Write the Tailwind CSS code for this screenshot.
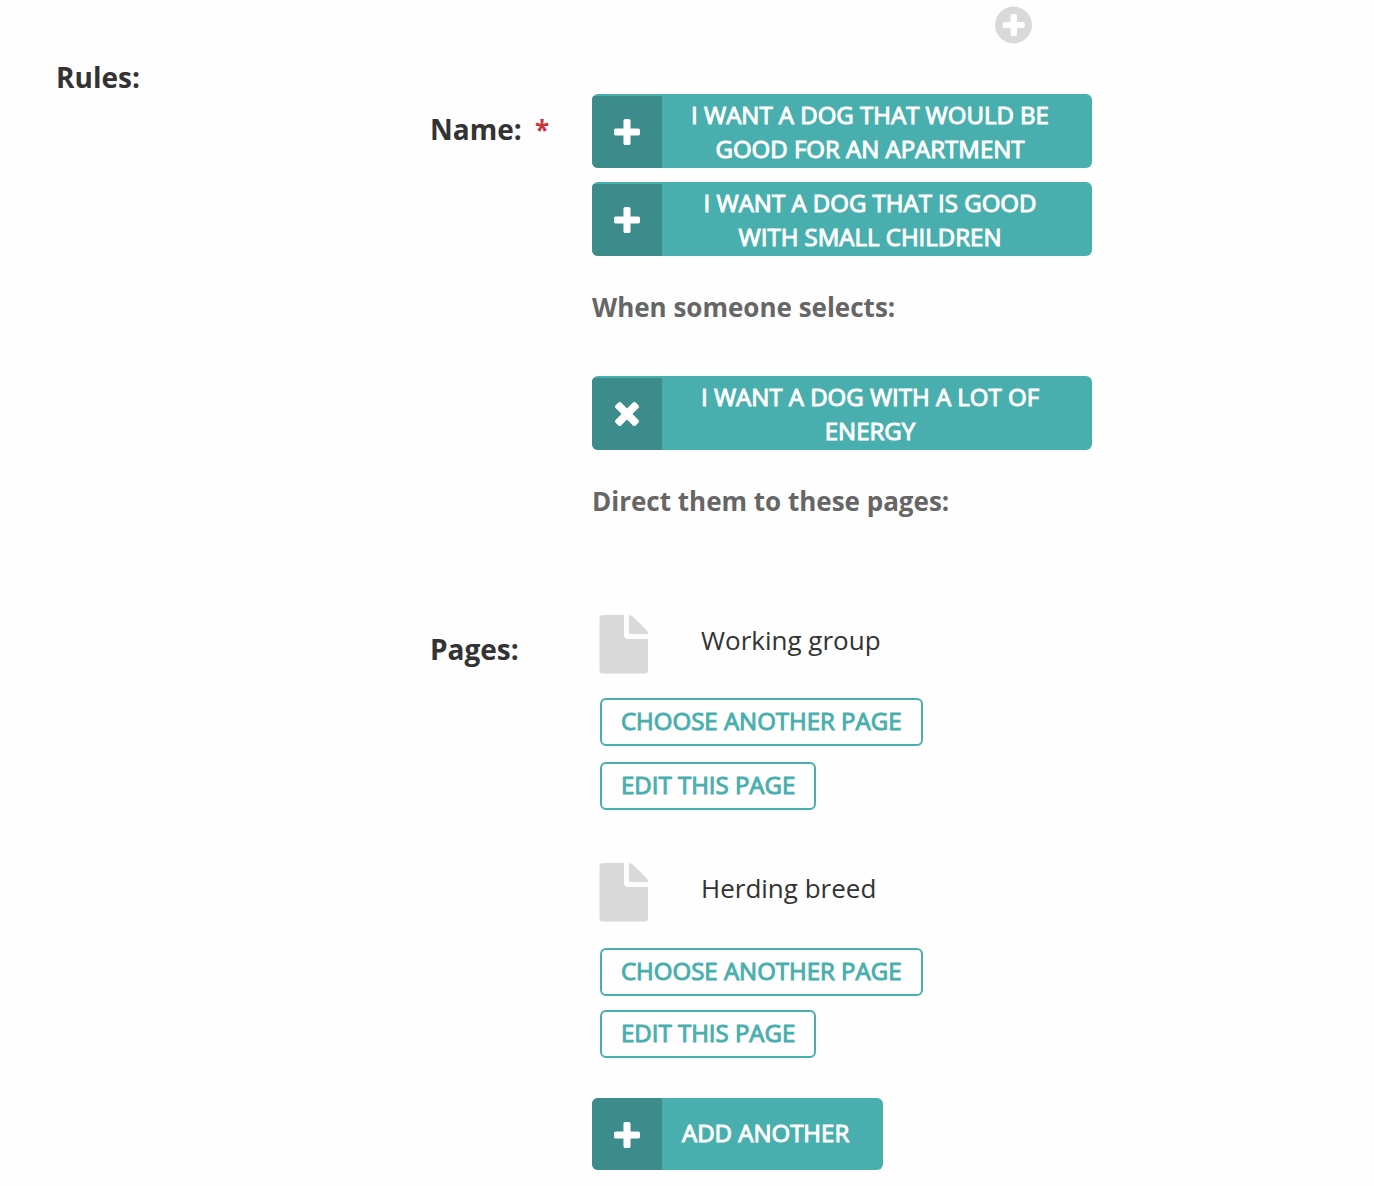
<!DOCTYPE html>
<html lang="en">
<head>
<meta charset="utf-8">
<meta name="viewport" content="width=device-width, initial-scale=1">
<title>Rules</title>
<script src="https://cdn.jsdelivr.net/npm/@tailwindcss/browser@4"></script>
</head>
<body class="bg-[#fefefe] font-['Open_Sans',sans-serif] text-[26px] leading-[34px] text-[#333]">
<svg class="hidden">
  <symbol id="plus" viewBox="192 128 1408 1408"><path d="M1600 736v192q0 40-28 68t-68 28h-416v416q0 40-28 68t-68 28h-192q-40 0-68-28t-28-68v-416h-416q-40 0-68-28t-28-68v-192q0-40 28-68t68-28h416v-416q0-40 28-68t68-28h192q40 0 68 28t28 68v416h416q40 0 68 28t28 68z" fill="currentColor"/></symbol>
  <symbol id="cross" viewBox="252 316 1288 1288"><path d="M1490 1322q0 40-28 68l-136 136q-28 28-68 28t-68-28l-294-294-294 294q-28 28-68 28t-68-28l-136-136q-28-28-28-68t28-68l294-294-294-294q-28-28-28-68t28-68l136-136q28-28 68-28t68 28l294 294 294-294q28-28 68-28t68 28l136 136q28 28 28 68t-28 68l-294 294 294 294q28 28 28 68z" fill="currentColor"/></symbol>
  <symbol id="file" viewBox="0 0 50 60"><path d="M3.500 1H25v20a4 4 0 0 0 4 4h20v31.500a3 3 0 0 1-3 3H3.500a3 3 0 0 1-3-3V4a3 3 0 0 1 3-3zM30 1c2 .3 3.500 1.200 5 2.700L46.500 15c1.400 1.500 2.200 3 2.500 5H30z" fill="currentColor"/></symbol>
</svg>
<form>
  <div class="flex h-[60px] pt-[6px] pl-[994px]">
    <button type="button" aria-label="Add" class="size-[38px] text-[#d9d9d9]">
      <svg class="size-full" viewBox="0 0 38 38"><circle cx="19.500" cy="19" r="18.500" fill="currentColor"/><path d="M18 8h3.500a1.500 1.500 0 0 1 1.500 1.500V16h6.200a1.500 1.500 0 0 1 1.500 1.500v3a1.500 1.500 0 0 1-1.500 1.500H23v6.500a1.500 1.500 0 0 1-1.500 1.500H18a1.500 1.500 0 0 1-1.500-1.500V22h-6.300a1.500 1.500 0 0 1-1.500-1.500v-3a1.500 1.500 0 0 1 1.500-1.500h6.300V9.500A1.500 1.500 0 0 1 18 8z" fill="#fff"/></svg>
    </button>
  </div>
  <div class="grid grid-cols-[374px_162px_minmax(0,500px)] pl-14 pb-4">
    <h2 class="text-[28px] leading-[34px] font-bold">Rules:</h2>
    <h3 class="pt-[52px] text-[28px] leading-[34px] font-bold">Name: <span class="ml-[6px] text-[26px] text-[#cd3238]">*</span></h3>
    <section class="pt-[34px]">
      <div class="flex flex-col gap-[14px]">
        <button type="button" class="flex w-full overflow-hidden rounded-md bg-[#49afae] pt-[2px] text-2xl/[34px] text-white [-webkit-text-stroke:1px_currentColor]">
          <span class="flex w-[70px] shrink-0 items-center justify-center self-stretch bg-[#3b8c8b]"><svg class="size-[26px]"><use href="#plus"/></svg></span>
          <span class="flex-1 pt-[2px] pr-[34px] pb-[2px] pl-5">I WANT A DOG THAT WOULD BE GOOD FOR AN APARTMENT</span>
        </button>
        <button type="button" class="flex w-full overflow-hidden rounded-md bg-[#49afae] pt-[2px] text-2xl/[34px] text-white [-webkit-text-stroke:1px_currentColor]">
          <span class="flex w-[70px] shrink-0 items-center justify-center self-stretch bg-[#3b8c8b]"><svg class="size-[26px]"><use href="#plus"/></svg></span>
          <span class="flex-1 pt-[2px] pr-[34px] pb-[2px] pl-5">I WANT A DOG THAT IS GOOD WITH SMALL CHILDREN</span>
        </button>
      </div>
      <p class="mt-[34px] font-bold text-[#666]">When someone selects:</p>
      <button type="button" class="mt-[52px] flex w-full overflow-hidden rounded-md bg-[#49afae] pt-[2px] text-2xl/[34px] text-white [-webkit-text-stroke:1px_currentColor]">
        <span class="flex w-[70px] shrink-0 items-center justify-center self-stretch bg-[#3b8c8b]"><svg class="size-[26px]"><use href="#cross"/></svg></span>
        <span class="flex-1 pt-[2px] pr-[34px] pb-[2px] pl-5">I WANT A DOG WITH A LOT OF ENERGY</span>
      </button>
      <p class="mt-[34px] font-bold text-[#666]">Direct them to these pages:</p>
    </section>

    <h3 class="col-start-2 pt-[114px] text-[28px] leading-[34px] font-bold">Pages:</h3>
    <section class="pt-[96px]">
      <div class="flex flex-col gap-[52px]">
        <article class="flex flex-col items-start pl-2">
          <div class="-ml-px flex gap-[52px] text-[#d9d9d9]">
            <svg class="h-[60px] w-[50px]"><use href="#file"/></svg>
            <p class="pt-[9px] text-[#333]">Working group</p>
          </div>
          <button type="button" class="mt-6 h-12 rounded-md border-2 border-[#49afae] px-[19px] pb-[2px] text-2xl text-[#49afae] [-webkit-text-stroke:1px_currentColor]">CHOOSE ANOTHER PAGE</button>
          <button type="button" class="mt-4 h-12 rounded-md border-2 border-[#49afae] px-[19px] pb-[2px] text-2xl text-[#49afae] [-webkit-text-stroke:1px_currentColor]">EDIT THIS PAGE</button>
        </article>
        <article class="flex flex-col items-start pl-2">
          <div class="-ml-px flex gap-[52px] text-[#d9d9d9]">
            <svg class="h-[60px] w-[50px]"><use href="#file"/></svg>
            <p class="pt-[9px] text-[#333]">Herding breed</p>
          </div>
          <button type="button" class="mt-[26px] h-12 rounded-md border-2 border-[#49afae] px-[19px] pb-[2px] text-2xl text-[#49afae] [-webkit-text-stroke:1px_currentColor]">CHOOSE ANOTHER PAGE</button>
          <button type="button" class="mt-[14px] h-12 rounded-md border-2 border-[#49afae] px-[19px] pb-[2px] text-2xl text-[#49afae] [-webkit-text-stroke:1px_currentColor]">EDIT THIS PAGE</button>
        </article>
      </div>
      <button type="button" class="mt-10 flex h-[72px] items-stretch overflow-hidden rounded-md bg-[#49afae] text-2xl text-white [-webkit-text-stroke:1px_currentColor]">
        <span class="flex w-[70px] items-center justify-center bg-[#3b8c8b] pt-[2px]"><svg class="size-[26px]"><use href="#plus"/></svg></span>
        <span class="self-center pr-[34px] pb-[2px] pl-5">ADD ANOTHER</span>
      </button>
    </section>
  </div>
</form>
</body>
</html>
